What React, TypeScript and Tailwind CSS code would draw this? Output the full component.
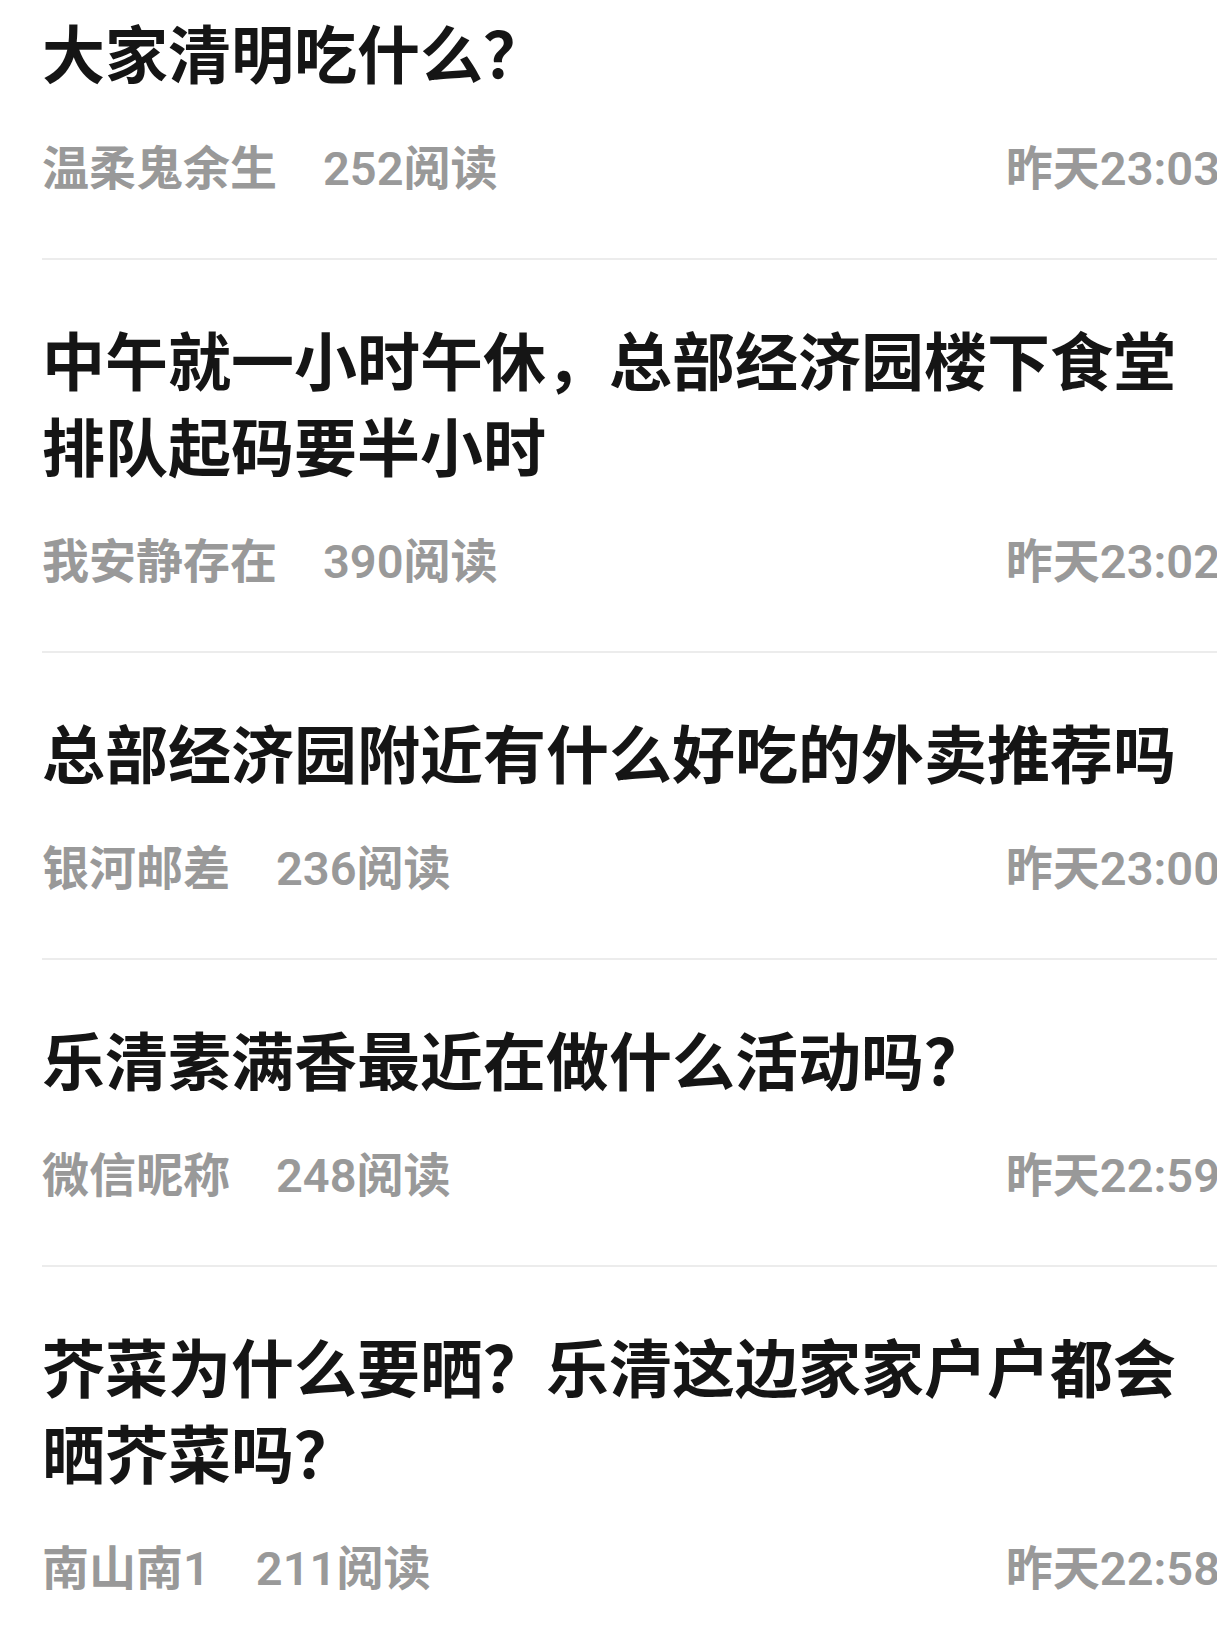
const posts = [
  { title: "大家清明吃什么？", author: "温柔鬼余生", reads: 252, time: "昨天23:03" },
  {
    title: "中午就一小时午休，总部经济园楼下食堂排队起码要半小时",
    author: "我安静存在",
    reads: 390,
    time: "昨天23:02",
  },
  { title: "总部经济园附近有什么好吃的外卖推荐吗", author: "银河邮差", reads: 236, time: "昨天23:00" },
  { title: "乐清素满香最近在做什么活动吗？", author: "微信昵称", reads: 248, time: "昨天22:59" },
  {
    title: "芥菜为什么要晒？乐清这边家家户户都会晒芥菜吗？",
    author: "南山南1",
    reads: 211,
    time: "昨天22:58",
  },
];

export default function App() {
  return (
    <div className="h-[1637px] w-[1217px] overflow-hidden bg-white font-['Roboto','Noto_Sans_CJK_SC',sans-serif]">
      <ul className="ml-[42px] w-[1178px]">
        {posts.map((post, index) => (
          <li
            key={post.title}
            className={`border-b-2 border-[#ececec] pb-[59px] ${index === 0 ? "pt-[14px]" : "pt-[61px]"}`}
          >
            <h2 className="w-[1140px] text-[63px] font-bold leading-[86px] text-[#151515]">
              {post.title}
            </h2>
            <div className="mt-[39px] flex items-center justify-between text-[47px] font-semibold leading-[60px] text-[#999999]">
              <div className="flex gap-[46px]">
                <span>{post.author}</span>
                <span>{post.reads}阅读</span>
              </div>
              <span>{post.time}</span>
            </div>
          </li>
        ))}
      </ul>
    </div>
  );
}
